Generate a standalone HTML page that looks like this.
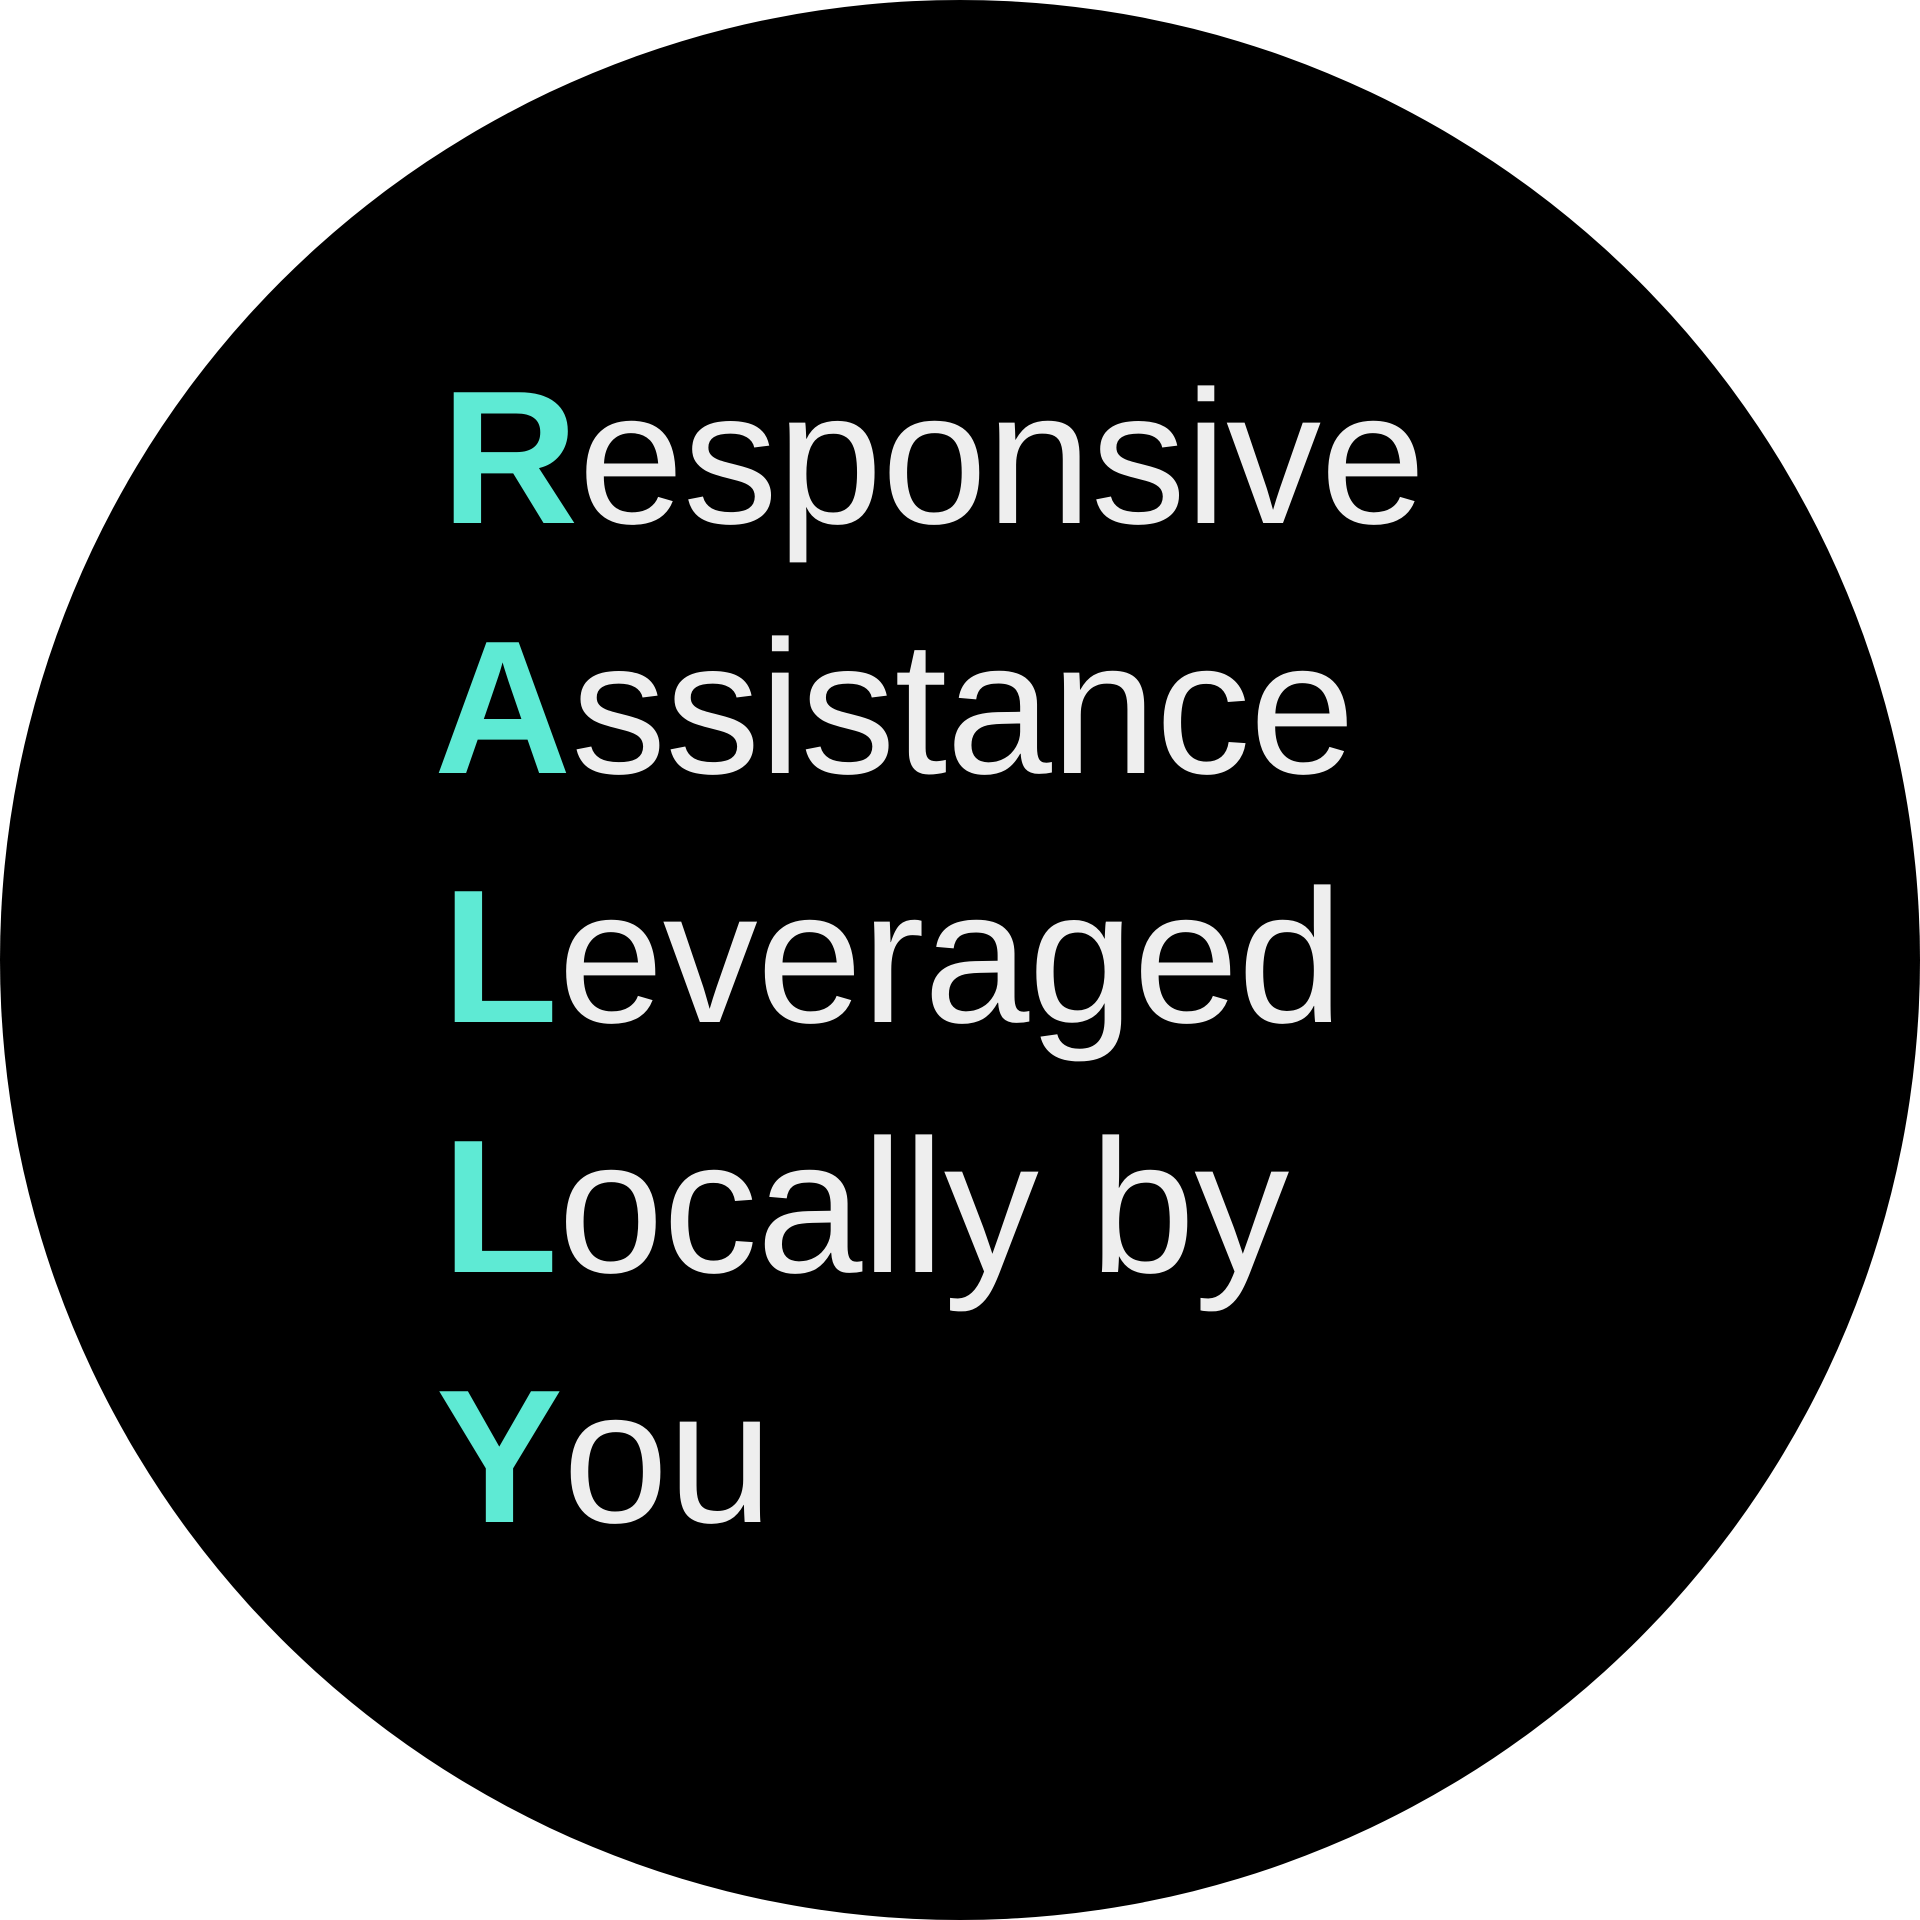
<!DOCTYPE html>
<html><head><meta charset="utf-8"><style>
html,body{margin:0;padding:0;background:#fff;}
.c{position:absolute;left:0;top:0;width:1920px;height:1920px;border-radius:50%;background:#000;overflow:hidden;}
.l{position:absolute;font-family:"Liberation Sans",Arial,sans-serif;font-size:190px;line-height:1;color:#eeeeee;white-space:nowrap;letter-spacing:-1px;}
.l b{color:#5eead4;font-weight:bold;letter-spacing:0;}
</style></head><body>
<div class="c">
<div class="l" style="left:441px;top:363px"><b>R</b>esponsive</div>
<div class="l" style="left:434px;top:613px"><b>A</b>ssistance</div>
<div class="l" style="left:442px;top:862px"><b>L</b>everaged</div>
<div class="l" style="left:442px;top:1112px"><b>L</b>ocally by</div>
<div class="l" style="left:436px;top:1362px"><b>Y</b>ou</div>
</div>
</body></html>
